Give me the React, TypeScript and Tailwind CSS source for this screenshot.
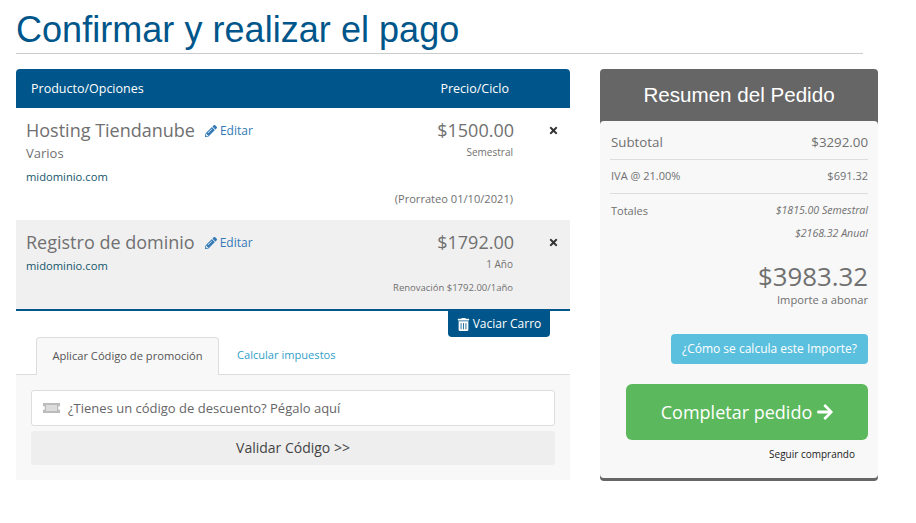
import { FaPencilAlt, FaTimes, FaTrashAlt, FaArrowRight } from "react-icons/fa";

const sans = "font-['Open_Sans',sans-serif]";

function Price({ price, children }: { price: string; children: React.ReactNode }) {
  return (
    <div className="w-[200px] flex flex-col items-end pr-px">
      <div className="text-[18px] leading-[25px] -mr-px text-[#707070]">{price}</div>
      {children}
    </div>
  );
}

function Row({ bg, name, children, right, height }: { bg: string; name: string; children: React.ReactNode; right: React.ReactNode; height: string }) {
  return (
    <div className={`flex ${bg} ${height}`}>
      <div className="flex-1 pl-[10px] pt-[10px]">
        <div className="flex items-center leading-[25px]">
          <span className="text-[18px] text-[#707070]">{name}</span>
          <a className="ml-[10px] flex items-center gap-[3px] text-[12px] text-[#337ab7]">
            <FaPencilAlt className="text-[12px]" />
            Editar
          </a>
        </div>
        {children}
      </div>
      <div className="pt-[10px]">{right}</div>
      <div className="w-[56px] pt-[10px] flex justify-end pr-[11px]">
        <div className="h-[25px] flex items-center">
          <FaTimes className="text-[11px] text-[#333]" />
        </div>
      </div>
    </div>
  );
}

function Ticket() {
  return (
    <svg width="17" height="10" viewBox="0 0 17 10" className="shrink-0">
      <path d="M0 0h17v3a2 2 0 0 0 0 4v3H0V7a2 2 0 0 0 0-4z" fill="#bcbcbc" />
      <rect x="3" y="2" width="11" height="6" fill="#dcdcdc" />
    </svg>
  );
}

export default function App() {
  return (
    <div className={`${sans} bg-white w-[916px] h-[523px] pl-4 overflow-hidden text-[#58595b]`}>
      <div className="w-[847px] h-[54px] border-b border-[#ccc]">
        <h1 className="font-['Liberation_Sans',sans-serif] text-[36px] tracking-[0.04px] leading-[40px] pt-[10px] text-[#00568a]">
          Confirmar y realizar el pago
        </h1>
      </div>
      <div className="flex gap-[30px] mt-[15px]">
        <div className="w-[554px]">
          <div className="h-[39px] pt-[2px] bg-[#00568a] rounded-t-[4px] flex items-center text-white text-[12.5px] pl-[15px]">
            <span className="flex-1">Producto/Opciones</span>
            <span className="w-[80px] mr-[61px] text-right">Precio/Ciclo</span>
          </div>
          <Row
            bg="bg-white"
            height="h-[112px]"
            name="Hosting Tiendanube"
            right={
              <Price price="$1500.00">
                <div className="text-[10px] leading-[14px] mt-[2px] text-[#707070]">Semestral</div>
                <div className="text-[11.1px] leading-[14px] mt-[33px] text-[#707070]">(Prorrateo 01/10/2021)</div>
              </Price>
            }
          >
            <div className="text-[13px] leading-[16px] mt-[2px] text-[#707070]">Varios</div>
            <div className="text-[11.2px] leading-[14px] mt-[9px] text-[#14566b]">midominio.com</div>
          </Row>
          <Row
            bg="bg-[#f0f0f0]"
            height="h-[89px]"
            name="Registro de dominio"
            right={
              <Price price="$1792.00">
                <div className="text-[10px] leading-[14px] mt-[2px] text-[#707070]">1 Año</div>
                <div className="text-[9.5px] leading-[14px] mt-[10px] text-[#707070]">Renovación $1792.00/1año</div>
              </Price>
            }
          >
            <div className="text-[11.2px] leading-[14px] mt-[4px] text-[#14566b]">midominio.com</div>
          </Row>
          <div className="h-[2px] bg-[#00568a]" />
          <div className="flex justify-end pr-[20px]">
            <div className="h-[26px] w-[102px] rounded-b-[4px] bg-[#00568a] text-white text-[12px] flex items-center justify-center gap-[3px]">
              <FaTrashAlt className="text-[13px]" />
              Vaciar Carro
            </div>
          </div>
          <div className="h-[38px] flex pl-[20px] border-b border-[#ddd]">
            <div className="h-[38px] w-[183px] bg-[#f8f8f8] border border-[#ddd] border-b-0 rounded-t-[4px] flex items-center justify-center text-[11.15px] text-[#555]">
              Aplicar Código de promoción
            </div>
            <div className="h-[37px] flex items-center pl-[18px] text-[11.1px] text-[#31a0c9]">Calcular impuestos</div>
          </div>
          <div className="h-[105px] bg-[#f8f8f8] px-[15px] pt-[15px]">
            <div className="h-[36px] bg-white border border-[#ddd] rounded-[3px] flex items-center pl-[11px] text-[13px] text-[#666] gap-[8px]">
              <Ticket />
              <span className="pt-px">¿Tienes un código de descuento? Pégalo aquí</span>
            </div>
            <div className="h-[34px] mt-[5px] pb-[2px] bg-[#eee] rounded-[3px] flex items-center justify-center text-[14px] text-[#444]">
              Validar Código &gt;&gt;
            </div>
          </div>
        </div>

        <div className="w-[278px] h-[412px] bg-[#666] rounded-[4px] flex flex-col">
          <div className="h-[52px] flex items-center justify-center font-['Liberation_Sans',sans-serif] text-[20.6px] text-white">
            Resumen del Pedido
          </div>
          <div className="h-[357px] bg-[#f8f8f8] rounded-[4px] px-[10px] text-[#707070] flex flex-col">
            <div className="h-[39px] pt-[5px] pl-px flex justify-between items-center border-b border-[#ddd] text-[13.3px]">
              <span>Subtotal</span>
              <span>$3292.00</span>
            </div>
            <div className="h-[34px] pl-px flex justify-between items-center border-b border-[#ddd] text-[11px]">
              <span>IVA @ 21.00%</span>
              <span>$691.32</span>
            </div>
            <div className="flex justify-between pl-px text-[11px] mt-[9px] leading-[15px]">
              <span>Totales</span>
              <span className="italic text-[10.6px]">$1815.00 Semestral</span>
            </div>
            <div className="text-right italic text-[10.6px] mt-[8px] leading-[15px]">$2168.32 Anual</div>
            <div className="text-right text-[25.8px] leading-[32px] mt-[19px]">$3983.32</div>
            <div className="text-right text-[11.15px] leading-[15px]">Importe a abonar</div>
            <div className="flex justify-end mt-[27px]">
              <div className="h-[30px] w-[197px] bg-[#5bc0de] rounded-[4px] flex items-center justify-center text-[12px] text-white">
                ¿Cómo se calcula este Importe?
              </div>
            </div>
            <div className="flex justify-end mt-[20px]">
              <div className="h-[56px] w-[242px] pl-px bg-[#5cb85c] rounded-[6px] flex items-center justify-center gap-[4px] text-[18px] text-white">
                Completar pedido
                <FaArrowRight className="text-[18px]" />
              </div>
            </div>
            <div className="text-right pr-[13px] text-[10px] text-[#222] mt-[7px] leading-[14px]">Seguir comprando</div>
          </div>
        </div>
      </div>
    </div>
  );
}
